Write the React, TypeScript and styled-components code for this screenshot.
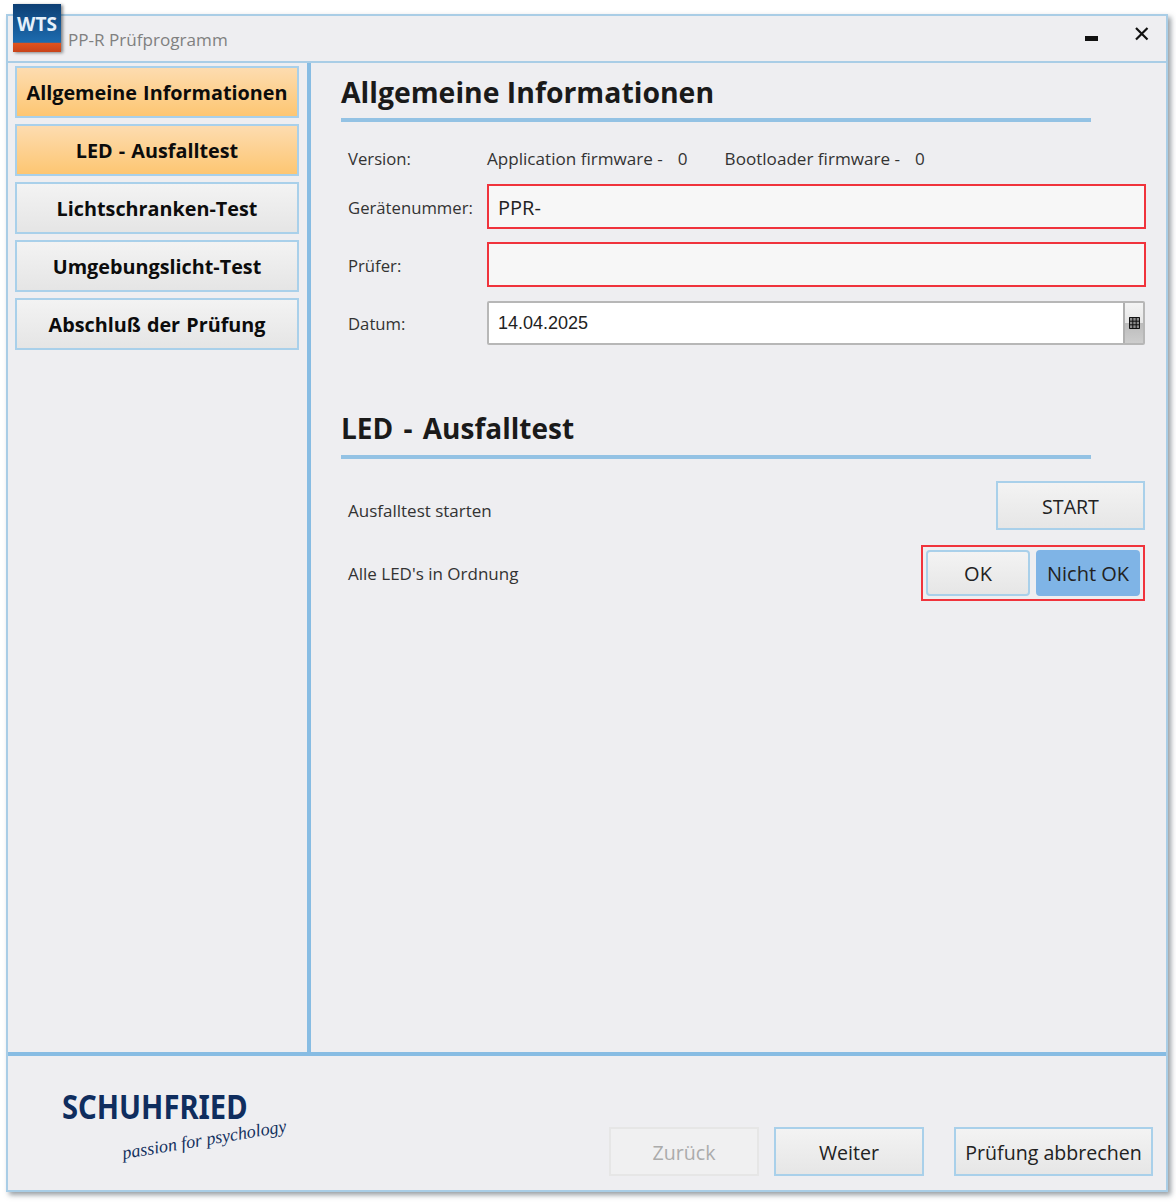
import styled, { createGlobalStyle } from 'styled-components';

const GlobalStyle = createGlobalStyle`
  html, body {
    margin: 0;
    padding: 0;
    background: #fff;
  }
  * {
    box-sizing: border-box;
  }
`;

const navItems = [
  { label: 'Allgemeine Informationen', active: true },
  { label: 'LED - Ausfalltest', active: true },
  { label: 'Lichtschranken-Test', active: false },
  { label: 'Umgebungslicht-Test', active: false },
  { label: 'Abschluß der Prüfung', active: false },
];

function App() {
  return (
    <>
      <GlobalStyle />
      <Page>
        <Window>
          <Badge>
            <BadgeText>WTS</BadgeText>
          </Badge>
          <TitleBar>
            <Title>PP-R Prüfprogramm</Title>
            <WindowControls>
              <Minimize />
              <svg width="16" height="16" viewBox="0 0 16 16">
                <path d="M2 2 L13.5 13.5 M13.5 2 L2 13.5" stroke="#111" strokeWidth="2.2" />
              </svg>
            </WindowControls>
          </TitleBar>
          <Body>
            <Sidebar>
              {navItems.map((item) => (
                <NavButton key={item.label} $active={item.active}>
                  {item.label}
                </NavButton>
              ))}
            </Sidebar>
            <Content>
              <Heading>Allgemeine Informationen</Heading>
              <InfoGrid>
                <Label>Version:</Label>
                <VersionRow>
                  <span>Application firmware -</span>
                  <VersionValue>0</VersionValue>
                  <BootLabel>Bootloader firmware -</BootLabel>
                  <VersionValue>0</VersionValue>
                </VersionRow>
                <FieldLabel>Gerätenummer:</FieldLabel>
                <TextField $invalid>PPR-</TextField>
                <FieldLabel>Prüfer:</FieldLabel>
                <TextField $invalid />
                <FieldLabel>Datum:</FieldLabel>
                <DateField>
                  <DateValue>14.04.2025</DateValue>
                  <DateButton>
                    <svg width="11" height="12" viewBox="0 0 11 12">
                      <rect x="0" y="0" width="11" height="12" fill="#8c8c8c" />
                      <path
                        d="M0.5 0.5H10.5V11.5H0.5ZM0.5 4.2H10.5M0.5 7.8H10.5M3.8 0.5V11.5M7.2 0.5V11.5"
                        fill="none"
                        stroke="#111"
                        strokeWidth="1"
                      />
                    </svg>
                  </DateButton>
                </DateField>
              </InfoGrid>
              <SecondHeading>LED - Ausfalltest</SecondHeading>
              <TestRow>
                <StartLabel>Ausfalltest starten</StartLabel>
                <StartButton>START</StartButton>
              </TestRow>
              <ResultRow>
                <TestLabel>Alle LED's in Ordnung</TestLabel>
                <ResultBox>
                  <ChoiceButton>OK</ChoiceButton>
                  <ChoiceButton $selected>Nicht OK</ChoiceButton>
                </ResultBox>
              </ResultRow>
            </Content>
          </Body>
          <Footer>
            <Logo>
              <LogoName>SCHUHFRIED</LogoName>
              <LogoTag>passion for psychology</LogoTag>
            </Logo>
            <FooterButtons>
              <FooterButton disabled>Zurück</FooterButton>
              <FooterButton>Weiter</FooterButton>
              <AbortButton>Prüfung abbrechen</AbortButton>
            </FooterButtons>
          </Footer>
        </Window>
      </Page>
    </>
  );
}

const Page = styled.div`
  width: 1176px;
  height: 1203px;
  padding: 14px 8px 11px 6px;
  font-family: "Open Sans", "Noto Sans", sans-serif;
  color: #222;
`;

const Window = styled.div`
  position: relative;
  height: 100%;
  display: flex;
  flex-direction: column;
  background: #eeeef1;
  border: 2px solid #a9cde6;
  box-shadow: 3px 3px 5px rgba(70, 80, 90, 0.55);
`;

const Badge = styled.div`
  position: absolute;
  left: 5px;
  top: -12px;
  width: 48px;
  height: 48px;
  background: linear-gradient(#0d3f74 0%, #1b66a8 70%, #1d6cae 80%, #e2531c 81%, #c8431a 100%);
  box-shadow: 2px 1px 3px rgba(0, 0, 0, 0.45);
`;

const BadgeText = styled.div`
  margin-top: 9px;
  text-align: center;
  font-size: 19px;
  line-height: 22px;
  font-weight: 700;
  color: #e6f0fa;
`;

const TitleBar = styled.div`
  height: 47px;
  flex: none;
  display: flex;
  justify-content: space-between;
  padding-left: 60px;
  border-bottom: 2px solid #a9cde6;
`;

const Title = styled.div`
  margin-top: 12px;
  font-size: 17.1px;
  line-height: 24px;
  color: #808080;
`;

const WindowControls = styled.div`
  display: flex;
  align-items: flex-start;
  gap: 36px;
  padding: 10px 16px 0 0;
`;

const Minimize = styled.div`
  width: 13px;
  height: 5px;
  margin-top: 10px;
  background: #111;
`;

const Body = styled.div`
  flex: 1;
  display: flex;
  min-height: 0;
  border-bottom: 4px solid #87bce3;
`;

const Sidebar = styled.div`
  width: 303px;
  flex: none;
  display: flex;
  flex-direction: column;
  gap: 6px;
  padding: 3px 0 0 7px;
  border-right: 4px solid #87bce3;
`;

const NavButton = styled.div<{ $active: boolean }>`
  width: 284px;
  height: 52px;
  display: flex;
  align-items: center;
  justify-content: center;
  font-size: 19.8px;
  font-weight: 700;
  word-spacing: 1px;
  color: #0c0c0c;
  border: 2px solid #a9d0ea;
  background: ${(p) =>
    p.$active
      ? 'linear-gradient(#fddcb0, #fdc672)'
      : 'linear-gradient(#f3f3f3, #e5e5e5)'};
`;

const Content = styled.div`
  flex: 1;
  padding: 7px 20px 0 30px;
`;

const Heading = styled.div`
  width: 750px;
  height: 52px;
  font-size: 28.4px;
  line-height: 44px;
  font-weight: 700;
  color: #1a1a1a;
  border-bottom: 4px solid #93c2e4;
`;

const SecondHeading = styled(Heading)`
  margin-top: 62px;
  line-height: 42px;
  font-size: 28px;
  word-spacing: 3px;
`;

const InfoGrid = styled.div`
  display: grid;
  grid-template-columns: 139px 1fr;
  align-items: center;
  row-gap: 13px;
  margin: 25px 0 0 7px;
`;

const Label = styled.div`
  font-size: 16.7px;
  line-height: 24px;
  color: #333;
`;

const FieldLabel = styled(Label)`
  padding-top: 2px;
`;

const VersionRow = styled.div`
  display: flex;
  font-size: 17.1px;
  line-height: 24px;
  color: #333;
`;

const VersionValue = styled.span`
  margin-left: 15px;
`;

const BootLabel = styled.span`
  margin-left: 37px;
`;

const TextField = styled.div<{ $invalid?: boolean }>`
  height: 45px;
  display: flex;
  align-items: center;
  padding: 1px 0 0 9px;
  font-size: 20px;
  background: #f7f7f7;
  border: 2px solid ${(p) => (p.$invalid ? '#f0333c' : '#b5b5b5')};
`;

const DateField = styled.div`
  height: 44px;
  display: flex;
  margin: 1px 1px 0 0;
  background: #fff;
  border: 2px solid #b7b7b7;
  border-radius: 2px;
`;

const DateValue = styled.div`
  flex: 1;
  padding-left: 9px;
  font-family: "Liberation Sans", Arial, sans-serif;
  font-size: 18px;
  line-height: 40px;
  color: #222;
`;

const DateButton = styled.div`
  width: 20px;
  display: flex;
  align-items: center;
  justify-content: center;
  border-left: 2px solid #b0b0b0;
  background: linear-gradient(#f4f4f4, #e6e6e6 50%, #bcbcbc 51%, #cdcdcd);
`;

const TestRow = styled.div`
  display: flex;
  justify-content: space-between;
  align-items: center;
  margin: 22px 1px 0 7px;
`;

const ResultRow = styled(TestRow)`
  margin-top: 15px;
`;

const TestLabel = styled.div`
  margin-top: 2px;
  font-size: 17px;
  line-height: 24px;
  color: #333;
`;

const StartLabel = styled(TestLabel)`
  margin-top: 10px;
`;

const ActionButton = styled.button`
  height: 49px;
  padding: 1px 0 0;
  font-family: inherit;
  font-size: 19.6px;
  color: #222;
  border: 2px solid #a9d0ea;
  background: linear-gradient(#f3f3f3, #e6e6e6);
`;

const StartButton = styled(ActionButton)`
  width: 149px;
`;

const ResultBox = styled.div`
  width: 224px;
  height: 56px;
  display: flex;
  gap: 6px;
  padding: 3px;
  border: 2px solid #f0333c;
`;

const ChoiceButton = styled.button<{ $selected?: boolean }>`
  flex: 1 1 0;
  padding: 0;
  font-family: inherit;
  font-size: 20px;
  color: #222;
  border-radius: 4px;
  border: 2px solid ${(p) => (p.$selected ? '#7fb4e6' : '#a9d0ea')};
  background: ${(p) => (p.$selected ? '#7fb4e6' : 'linear-gradient(#f3f3f3, #e6e6e6)')};
`;

const Footer = styled.div`
  height: 134px;
  flex: none;
  display: flex;
  justify-content: space-between;
  padding: 34px 13px 0 54px;
`;

const Logo = styled.div`
  width: 240px;
`;

const LogoName = styled.div`
  font-family: "Noto Sans", sans-serif;
  font-size: 33.5px;
  line-height: 32px;
  font-weight: 700;
  color: #0f2d5e;
  transform-origin: left center;
  transform: scaleX(0.87);
`;

const LogoTag = styled.div`
  margin: 21px 0 0 62px;
  white-space: nowrap;
  font-family: "Liberation Serif", serif;
  font-size: 18px;
  line-height: 20px;
  font-style: italic;
  color: #14315f;
  transform-origin: left bottom;
  transform: rotate(-9.5deg);
`;

const FooterButtons = styled.div`
  display: flex;
  padding-top: 37px;
`;

const FooterButton = styled(ActionButton)`
  width: 150px;
  margin-right: 15px;

  &:disabled {
    color: #ababab;
    border-color: #e6e6e6;
    background: #f0f0f1;
  }
`;

const AbortButton = styled(ActionButton)`
  width: 199px;
  margin-left: 15px;
`;

export default App;
